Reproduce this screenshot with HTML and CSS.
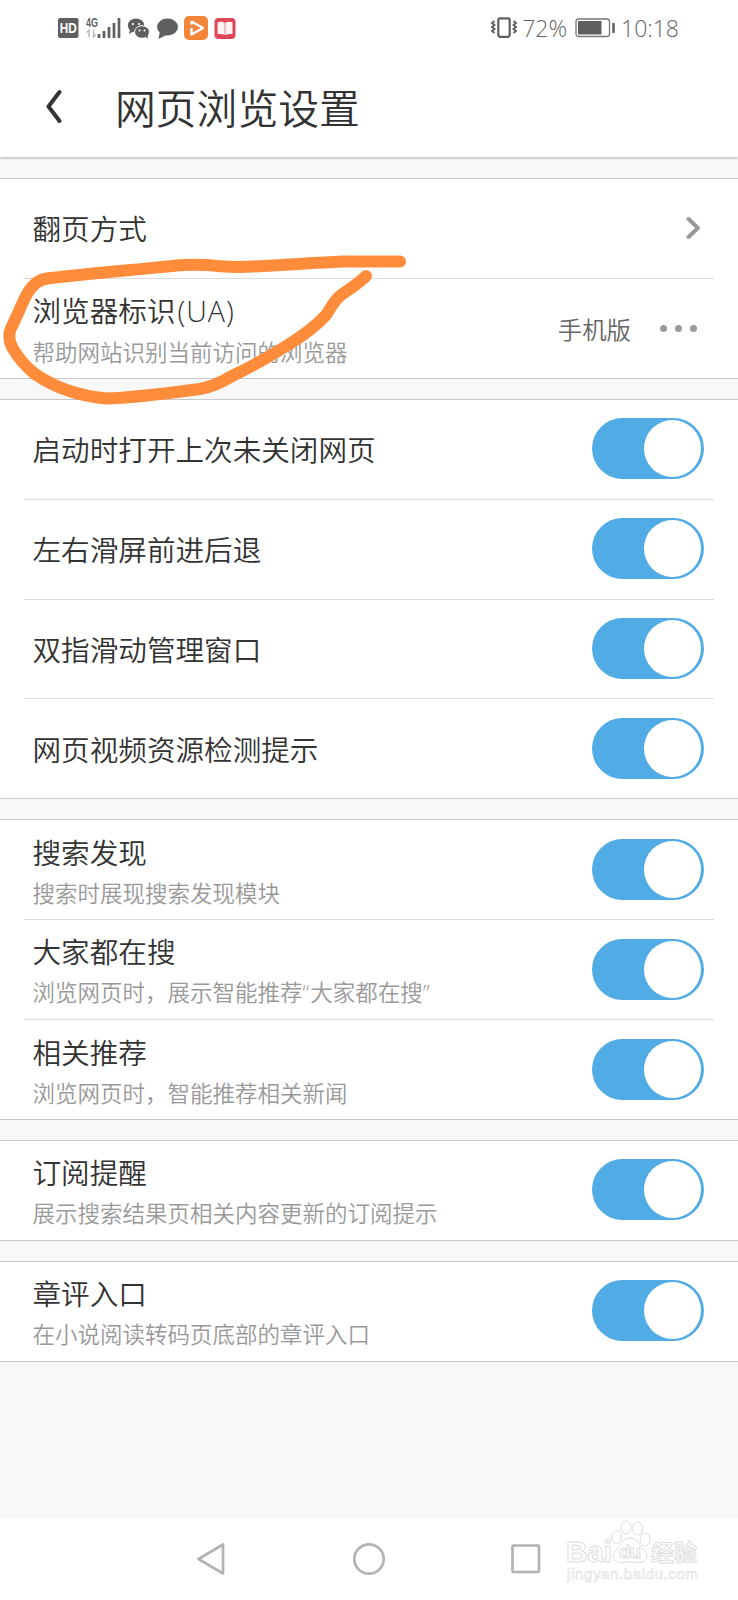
FILE: index.html
```
<!DOCTYPE html>
<html lang="zh-CN">
<head>
<meta charset="UTF-8" />
<title>网页浏览设置</title>
<link rel="stylesheet" href="styles.css">
</head>
<body>
  <div class="status-bar">
    <svg class="status-icons" width="182" height="30" viewBox="0 0 182 30">
      <!-- HD -->
      <rect x="1" y="5" width="20.500" height="20" rx="2" fill="#5f5f5f"/>
      <text x="11.200" y="20" class="hd" textLength="17" lengthAdjust="spacingAndGlyphs">HD</text>
      <!-- signal -->
      <text x="29" y="13.500" class="net" textLength="12" lengthAdjust="spacingAndGlyphs">4G</text>
      <path d="M32 24v-7l-2.500 2.500M36.500 17v7l2.500-2.500" class="data"/>
      <path d="M42 25v-4M47 25v-7M52 25v-11M57 25v-15M62 25V5" class="bars"/>
      <!-- wechat -->
      <ellipse cx="79" cy="12.500" rx="8.200" ry="7" fill="#5f5f5f"/>
      <path d="M73 16l-1 5 5-3z" fill="#5f5f5f"/>
      <ellipse cx="85" cy="19" rx="7.500" ry="6.300" fill="#5f5f5f" stroke="#fff"/>
      <path d="M88 23l3 3-.5-4.500z" fill="#5f5f5f"/>
      <g fill="#fff"><circle cx="76" cy="11" r="1.100"/><circle cx="82" cy="11" r="1.100"/><circle cx="82.500" cy="17.500" r="1"/><circle cx="87.500" cy="17.500" r="1"/></g>
      <!-- message -->
      <ellipse cx="110.500" cy="14" rx="10.500" ry="8.500" fill="#5f5f5f"/>
      <path d="M103 18l-1.500 8 8-4z" fill="#5f5f5f"/>
      <!-- video -->
      <rect x="127" y="3" width="24" height="24" rx="5" fill="#f4863b"/>
      <path d="M134.500 8v3.500M134.500 15v6.500l11.500-6.500-11.500-6.500" class="play"/>
      <!-- reader -->
      <rect x="157.500" y="5" width="21" height="21" rx="4" fill="#df4658"/>
      <path d="M160.500 9.500q4-1.500 7.500.5 3.500-2 7.500-.5V21q-4-.5-7.500 1-3.500-1.500-7.500-1z" fill="#fff3f3"/>
      <path d="M168 10v11.500" stroke="#e28a94"/>
    </svg>
    <div class="status-right">
      <svg width="28" height="24" viewBox="0 0 28 24">
        <rect x="8.300" y="2.300" width="11.400" height="18.500" rx="2" class="phone"/>
        <path d="M4.500 5l-2.500 2 2.500 2-2.500 2 2.500 2-2.500 2 2.500 2M23.500 5l2.500 2-2.500 2 2.500 2-2.500 2 2.500 2-2.500 2" class="buzz"/>
      </svg>
      <span class="percent">72%</span>
      <svg class="battery" width="41" height="22" viewBox="0 0 41 22">
        <rect x="1" y="2" width="33.500" height="17.500" rx="2.500" class="cell"/>
        <rect x="3" y="4" width="23.500" height="13.500" fill="#5f5f5f"/>
        <path d="M38.500 6v10" stroke="#5f5f5f" stroke-width="2.500"/>
      </svg>
      <span class="clock">10:18</span>
    </div>
  </div>

  <div class="header">
    <svg class="back" width="18" height="36" viewBox="0 0 18 36">
      <path d="M15.500 3L4.500 17.500 15.500 32"/>
    </svg>
    <h1>网页浏览设置</h1>
  </div>

  <div class="content">
    <div class="section">
      <div class="row">
        <div class="label">翻页方式</div>
        <svg class="arrow" width="16" height="24" viewBox="0 0 16 24"><path d="M3.500 3L13 12 3.500 21"/></svg>
      </div>
      <div class="row">
        <div class="text">
          <div class="label">浏览器标识<span class="latin">(UA)</span></div>
          <div class="desc">帮助网站识别当前访问的浏览器</div>
        </div>
        <div class="value">手机版</div>
        <div class="dots"><i></i><i></i><i></i></div>
      </div>
    </div>

    <div class="section">
      <div class="row"><div class="label">启动时打开上次未关闭网页</div><div class="toggle"></div></div>
      <div class="row"><div class="label">左右滑屏前进后退</div><div class="toggle"></div></div>
      <div class="row"><div class="label">双指滑动管理窗口</div><div class="toggle"></div></div>
      <div class="row"><div class="label">网页视频资源检测提示</div><div class="toggle"></div></div>
    </div>

    <div class="section">
      <div class="row">
        <div class="text">
          <div class="label">搜索发现</div>
          <div class="desc">搜索时展现搜索发现模块</div>
        </div>
        <div class="toggle"></div>
      </div>
      <div class="row">
        <div class="text">
          <div class="label">大家都在搜</div>
          <div class="desc">浏览网页时，展示智能推荐<span class="quote">“</span>大家都在搜<span class="quote">”</span></div>
        </div>
        <div class="toggle"></div>
      </div>
      <div class="row">
        <div class="text">
          <div class="label">相关推荐</div>
          <div class="desc">浏览网页时，智能推荐相关新闻</div>
        </div>
        <div class="toggle"></div>
      </div>
    </div>

    <div class="section">
      <div class="row">
        <div class="text">
          <div class="label">订阅提醒</div>
          <div class="desc">展示搜索结果页相关内容更新的订阅提示</div>
        </div>
        <div class="toggle"></div>
      </div>
    </div>

    <div class="section">
      <div class="row">
        <div class="text">
          <div class="label">章评入口</div>
          <div class="desc">在小说阅读转码页底部的章评入口</div>
        </div>
        <div class="toggle"></div>
      </div>
    </div>
  </div>

  <div class="nav-bar">
    <svg width="32" height="36" viewBox="0 0 32 36"><path d="M27 3.500v29L2.500 18z"/></svg>
    <svg width="36" height="36" viewBox="0 0 36 36"><circle cx="18" cy="18" r="14.700"/></svg>
    <svg width="32" height="36" viewBox="0 0 32 36"><rect x="2.500" y="4.500" width="26.500" height="26.500" rx="1"/></svg>
  </div>

  <!-- hand drawn circle -->
  <svg class="marker" width="420" height="220" viewBox="0 0 420 220">
    <path d="M400 71.500H342C310 73 270 76 240 77C222 77 205 74 185 75C165 76 148 79 130 80C105 82 70 86 50 88C39 89 33 94 27 104C20 117 17 127 11 138C8 145 9 151 12 157C18 168 25 176 35 184C54 197 80 206 106 208.500C130 208 170 203 200 199C212 197 222 192 232 186C253 176 272 165 288 155C304 145 318 134 326 125C331 118 333 112 340 106C348 100 358 94 366 86"/>
  </svg>

  <!-- watermark -->
  <svg class="watermark" width="150" height="76" viewBox="0 0 150 76">
    <text x="0" y="41.500" class="wm-big" textLength="46">Bai</text>
    <g class="paw">
      <ellipse cx="50.500" cy="17" rx="5" ry="6.500"/>
      <ellipse cx="60" cy="7.500" rx="5" ry="6.500"/>
      <ellipse cx="71.500" cy="8.500" rx="5" ry="6.500"/>
      <ellipse cx="79" cy="19.500" rx="5" ry="6.500"/>
      <path d="M64 18C57 18 54 26 50 30C44 37 49 43 56 42.500Q64 41 73 42.500C81 43 84 36 78 30C73 26 72 18 64 18z"/>
    </g>
    <text x="53" y="38" class="wm-du" textLength="22">du</text>
    <text x="85" y="40.500" class="wm-cn" textLength="46">经验</text>
    <text x="1" y="59" class="wm-url" textLength="131">jingyan.baidu.com</text>
  </svg>
</body>
</html>
```

FILE: styles.css
```
* {
  box-sizing: border-box;
}

body {
  margin: 0;
  position: relative;
  width: 738px;
  height: 1600px;
  overflow: hidden;
  display: flex;
  flex-direction: column;
  background: #f8f8f8;
  color: #333;
  font-family: "Noto Sans CJK SC DemiLight", "Noto Sans CJK SC", sans-serif;
  font-weight: 350;
}

/* status bar */
.status-bar {
  position: relative;
  z-index: 1;
  height: 56px;
  padding: 0 59px 0 57px;
  background: #fff;
  display: flex;
  align-items: center;
  justify-content: space-between;
}
.status-right {
  display: flex;
  align-items: center;
  color: #666;
  font-family: "Open Sans", sans-serif;
  font-weight: 300;
  font-size: 23px;
}
.status-right span {
  margin-top: -1px;
}
.status-right svg,
.status-icons {
  fill: none;
}
.percent {
  margin-left: 4px;
}
.battery {
  margin: 0 5px 0 8px;
}
.hd {
  font: bold 14px "Liberation Sans", sans-serif;
  fill: #fff;
  text-anchor: middle;
}
.net {
  font: bold 13px "Liberation Sans", sans-serif;
  fill: #5f5f5f;
}
.data {
  stroke: #bbb;
  stroke-width: 1.5;
}
.bars {
  stroke: #5f5f5f;
  stroke-width: 2.7;
}
.play {
  stroke: #fff;
  stroke-width: 2.5;
  stroke-linejoin: round;
}
.phone {
  stroke: #5f5f5f;
  stroke-width: 2.2;
}
.buzz {
  stroke: #5f5f5f;
  stroke-width: 1.8;
}
.cell {
  stroke: #777;
  stroke-width: 1.3;
}

/* title bar */
.header {
  position: relative;
  height: 101px;
  padding: 0 0 0 44px;
  display: flex;
  align-items: center;
  background: #fff;
  box-shadow: 0 1px 3px rgba(0,0,0,0.3);
}
.header h1 {
  margin: 0 0 0 53px;
  font-size: 40.8px;
  font-weight: 350;
  line-height: 56px;
}
.back {
  fill: none;
  stroke: #333;
  stroke-width: 4;
  stroke-linecap: round;
  stroke-linejoin: round;
}

/* settings list */
.content {
  flex: 1;
  padding-top: 21px;
}
.section {
  margin-bottom: 20px;
  padding: 0 24px;
  background: #fff;
  border-top: 1px solid #c8c8c8;
  border-bottom: 1px solid #c8c8c8;
}
.row {
  height: 99.9px;
  padding: 0 10px 0 8.5px;
  display: flex;
  align-items: center;
  border-bottom: 1px solid #dcdcdc;
}
.row:last-child {
  height: 98.9px;
  border-bottom: none;
}
.label {
  flex: 1;
  font-size: 28.6px;
  line-height: 40px;
}
.text {
  flex: 1;
  padding-top: 4px;
}
.desc {
  font-size: 22.5px;
  line-height: 40px;
  color: #999;
}
.latin {
  font-family: "Open Sans", sans-serif;
  font-weight: 300;
  letter-spacing: 1px;
  margin-left: 2px;
}
.quote {
  font-family: "Open Sans", sans-serif;
  font-weight: 300;
  letter-spacing: 1px;
}
.value {
  font-size: 24.4px;
  color: #666;
}
.arrow {
  margin-right: 3px;
  fill: none;
  stroke: #999;
  stroke-width: 4;
  stroke-linecap: round;
  stroke-linejoin: round;
}
.dots {
  display: flex;
  gap: 8px;
  margin: 0 7px 0 29px;
}
.dots i {
  width: 7px;
  height: 7px;
  border-radius: 50%;
  background: #999;
}
.toggle {
  width: 112px;
  height: 61px;
  margin-bottom: 1px;
  padding: 2px 3px;
  border-radius: 31px;
  background: #51abe5;
  display: flex;
  justify-content: flex-end;
}
.toggle::after {
  content: "";
  width: 57px;
  height: 57px;
  border-radius: 50%;
  background: #fff;
}

/* system navigation */
.nav-bar {
  height: 82px;
  padding: 0 196px;
  background: #fff;
  display: flex;
  align-items: center;
  justify-content: space-between;
}
.nav-bar svg {
  fill: none;
  stroke: #b3b3b3;
  stroke-width: 2.7;
  stroke-linejoin: round;
}

/* overlays */
.marker {
  position: absolute;
  left: 0;
  top: 190px;
  fill: none;
  stroke: #ff8c3a;
  stroke-width: 12;
  stroke-linecap: round;
  stroke-linejoin: round;
}
.watermark {
  position: absolute;
  left: 566px;
  top: 1520px;
  fill: #fff;
  stroke: #dedede;
  stroke-width: 1;
}
.wm-big {
  font: bold 30px "Liberation Sans", sans-serif;
}
.wm-du {
  font: bold 19px "Liberation Sans", sans-serif;
}
.wm-cn {
  font: bold 23px "Noto Sans CJK SC", sans-serif;
}
.wm-url {
  font: 15px "Liberation Sans", sans-serif;
  stroke-width: 0.6;
}
```
